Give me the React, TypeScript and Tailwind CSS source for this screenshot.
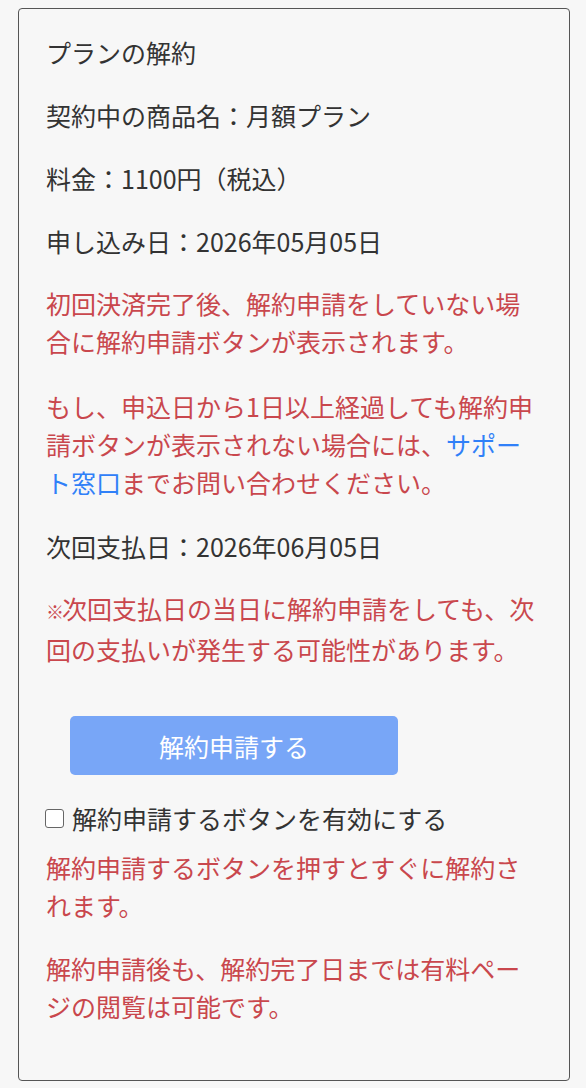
const red = "text-[#c9474d]";

export default function App() {
  return (
    <div className="min-h-[1088px] bg-[#f7f7f7] pt-[8px] font-['Noto_Sans_CJK_JP','Noto_Sans',sans-serif] text-[25px] leading-[38px] text-[#333]">
      <section className="ml-[18px] w-[552px] rounded-[4px] border border-[#555] bg-[#f7f7f7] px-[27px] pt-[24px] pb-[55px]">
        <p>プランの解約</p>
        <p className="mt-[25px]">契約中の商品名：月額プラン</p>
        <p className="mt-[25px]">料金：1100円（税込）</p>
        <p className="mt-[25px]">申し込み日：2026年05月05日</p>
        <p className={`mt-[24px] ${red}`}>
          初回決済完了後、解約申請をしていない場合に解約申請ボタンが表示されます。
        </p>
        <p className={`mt-[27px] ${red}`}>
          もし、申込日から1日以上経過しても解約申請ボタンが表示されない場合には、
          <a href="#" className="text-[#3080f8]">サポート窓口</a>
          までお問い合わせください。
        </p>
        <p className="mt-[26px]">次回支払日：2026年06月05日</p>
        <p className={`mt-[24px] ${red}`}>
          <span className="inline-block w-[16px] text-[18px] font-bold leading-[38px]">※</span>
          次回支払日の当日に解約申請をしても、次回の支払いが発生する可能性があります。
        </p>

        <div className="mt-[48px] pl-[24px]">
          <button
            type="button"
            disabled
            className="h-[59px] w-[328px] rounded-[5px] bg-[#78a6f7] text-[25px] text-white"
          >
            解約申請する
          </button>
        </div>

        <label className="mt-[24px] flex items-center">
          <input
            type="checkbox"
            className="ml-[-1px] mr-[8px] h-[19px] w-[19px] appearance-none rounded-[3px] border border-[#666] bg-white"
          />
          <span>解約申請するボタンを有効にする</span>
        </label>

        <p className={`mt-[11px] ${red}`}>
          解約申請するボタンを押すとすぐに解約されます。
        </p>
        <p className={`mt-[25px] ${red}`}>
          解約申請後も、解約完了日までは有料ページの閲覧は可能です。
        </p>
      </section>
    </div>
  );
}
